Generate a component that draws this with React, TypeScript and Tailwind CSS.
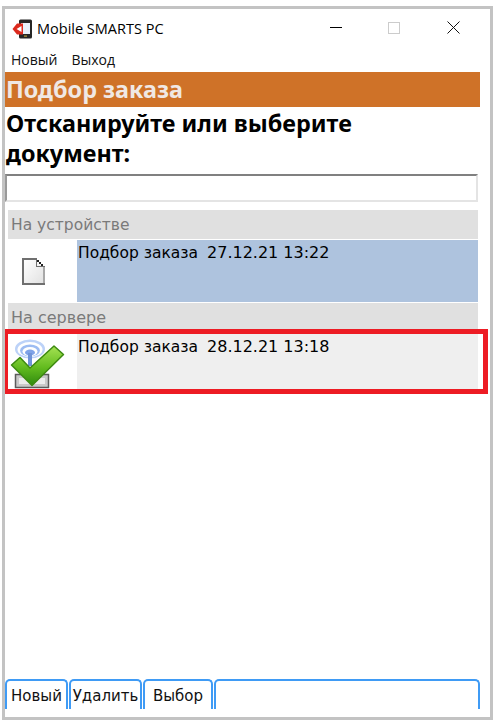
export default function App() {
  return (
    <div className="w-[498px] h-[726px] bg-white pt-[6px] pl-[2px]" style={{ fontFamily: '"Noto Sans", sans-serif' }}>
      <div className="w-[491px] h-[714px] border-[3px] border-[#c3c3c3] bg-white flex flex-col">
        <div className="h-[37px] flex items-center shrink-0 pl-[7px]">
          <svg width="21" height="20" viewBox="0 0 21 20" className="mt-[2px]">
            <rect x="7" y="0.5" width="13" height="19" rx="1.5" fill="#262626" />
            <rect x="9" y="4" width="9" height="11" fill="#e9f1fb" />
            <path d="M0.5 10 L5 4.5 H11 V15.5 H5 Z" fill="#dc2a1e" />
            <path d="M9.5 7 L4.5 10 L9.5 13 Z" fill="#fff" />
            <rect x="12" y="16.5" width="3" height="1.2" fill="#b59a3c" />
          </svg>
          <span className="ml-[4px] pt-[4px] text-[14.5px] leading-none text-black" style={{ fontFamily: '"Open Sans", sans-serif' }}>Mobile SMARTS PC</span>
          <div className="ml-auto flex items-center">
            <div className="w-[12px] h-px bg-black mr-[46px]" />
            <div className="w-[12px] h-[12px] border border-[#cccccc] mr-[47px]" />
            <svg width="13" height="13" viewBox="0 0 13 13" className="mr-[30px]"><path d="M0.5 0.5 L12.5 12.5 M12.5 0.5 L0.5 12.5" stroke="#111" strokeWidth="1" /></svg>
          </div>
        </div>
        <div className="h-[26px] flex items-center shrink-0 pl-[6px] gap-[14px] text-[14px] text-[#111]" style={{ fontFamily: '"Open Sans", sans-serif' }}>
          <span>Новый</span>
          <span>Выход</span>
        </div>
        <div className="w-[475px] h-[35px] bg-[#cf7228] flex items-center pl-[1px] text-[23.4px] font-bold text-[#f0e8e4] shrink-0">Подбор заказа</div>
        <div className="w-[475px] pl-[1px] pt-[1px] text-[23.4px] leading-[30px] font-bold text-black shrink-0">Отсканируйте или выберите документ:</div>
        <div className="w-[473px] h-[28px] mt-[6px] border-2 border-[#e4e4e4] border-t-[#808080] border-l-[#999] bg-white shrink-0" />
        <div className="w-[470px] ml-[3px] h-[29px] mt-[8px] bg-[#e0e0e0] flex items-center pl-[3px] pt-[2px] text-[15.5px] text-[#7a7a7a] shrink-0" style={{ fontFamily: '"DejaVu Sans", sans-serif' }}>На устройстве</div>
        <div className="w-[470px] ml-[3px] h-[62px] mt-px flex shrink-0">
          <div className="w-[69px] flex items-center pl-[14px] bg-white">
            <svg width="24" height="27" viewBox="0 0 24 27" shapeRendering="crispEdges">
              <defs>
                <linearGradient id="doc" x1="0" y1="0" x2="1" y2="1">
                  <stop offset="0" stopColor="#ffffff" />
                  <stop offset="1" stopColor="#e2e2e2" />
                </linearGradient>
              </defs>
              <path d="M0 0 H15 V2 H17 V4 H19 V6 H21 V8 H23 V27 H0 Z" fill="#6f6f6f" />
              <path d="M2 2 H14 V9 H21 V25 H2 Z" fill="url(#doc)" />
              <rect x="21" y="9" width="2" height="16" fill="#a8a8a8" />
              <rect x="15" y="2" width="2" height="2" fill="#222" />
              <rect x="17" y="4" width="2" height="2" fill="#222" />
              <rect x="19" y="6" width="2" height="2" fill="#222" />
              <rect x="15" y="4" width="2" height="4" fill="#f4f4f4" />
              <rect x="17" y="6" width="2" height="2" fill="#f4f4f4" />
            </svg>
          </div>
          <div className="flex-1 bg-[#aec3de] pl-px pt-[2px] leading-[22px] text-black whitespace-pre" style={{ fontFamily: '"DejaVu Sans", sans-serif' }}>
            <span className="text-[15.5px]">Подбор заказа</span>
            <span className="ml-[9px] text-[16px]">27.12.21 13:22</span>
          </div>
        </div>
        <div className="w-[470px] ml-[3px] h-[26px] mt-px bg-[#e0e0e0] flex items-start pl-[3px] pt-[3px] text-[16px] text-[#7a7a7a] shrink-0" style={{ fontFamily: '"DejaVu Sans", sans-serif' }}>На сервере</div>
        <div className="w-[483px] h-[65px] border-[5px] border-l-[3px] border-[#ed1c24] flex shrink-0 bg-white">
          <div className="w-[69px] bg-white pl-[3px] pt-[5px]">
            <svg width="54" height="50" viewBox="0 0 54 50" className="overflow-visible">
              <defs>
                <linearGradient id="chk" x1="0" y1="0" x2="0" y2="1">
                  <stop offset="0" stopColor="#a6e254" />
                  <stop offset="0.55" stopColor="#62bb1e" />
                  <stop offset="1" stopColor="#2f8a0e" />
                </linearGradient>
              </defs>
              <ellipse cx="19" cy="10" rx="15" ry="9.5" fill="#bcd2f8" />
              <ellipse cx="19" cy="10.5" rx="12.5" ry="7.5" fill="#ffffff" />
              <ellipse cx="19" cy="11.5" rx="10" ry="6" fill="#9dbcf2" />
              <ellipse cx="19" cy="12.5" rx="7.5" ry="4.5" fill="#ffffff" />
              <ellipse cx="19" cy="13.5" rx="5" ry="3" fill="#7fa3e8" />
              <rect x="17" y="14" width="4" height="13" fill="#6f93d8" />
              <rect x="4.5" y="35.5" width="33" height="13" fill="#c9c9c9" stroke="#5c5c5c" strokeWidth="1.5" />
              <rect x="8" y="39" width="26" height="6" fill="#ececec" />
              <path d="M0.5 26 L9 18.5 L19 29 L43 7 L52.5 15.5 L21 46.5 Z" fill="url(#chk)" stroke="#3d8a10" strokeWidth="1.5" strokeLinejoin="round" />
            </svg>
          </div>
          <div className="w-[401px] bg-[#efefef] pl-px leading-[22px] pt-[2px] text-black whitespace-pre" style={{ fontFamily: '"DejaVu Sans", sans-serif' }}>
            <span className="text-[15.5px]">Подбор заказа</span>
            <span className="ml-[9px] text-[16px]">28.12.21 13:18</span>
          </div>
        </div>
        <div className="mt-auto mb-[8px] h-[30px] flex gap-px text-[15px] text-[#111]" style={{ fontFamily: '"DejaVu Sans", sans-serif' }}>
          <div className="w-[63px] pt-[3px] border-2 border-b-0 border-[#3f9bf5] rounded-t-[5px] flex items-center justify-center">Новый</div>
          <div className="w-[73px] pt-[3px] border-2 border-b-0 border-[#3f9bf5] rounded-t-[5px] flex items-center justify-center">Удалить</div>
          <div className="w-[70px] pt-[3px] border-2 border-b-0 border-[#3f9bf5] rounded-t-[5px] flex items-center justify-center">Выбор</div>
          <div className="w-[266px] border-2 border-b-0 border-[#3f9bf5] rounded-t-[5px]" />
        </div>
      </div>
    </div>
  );
}
